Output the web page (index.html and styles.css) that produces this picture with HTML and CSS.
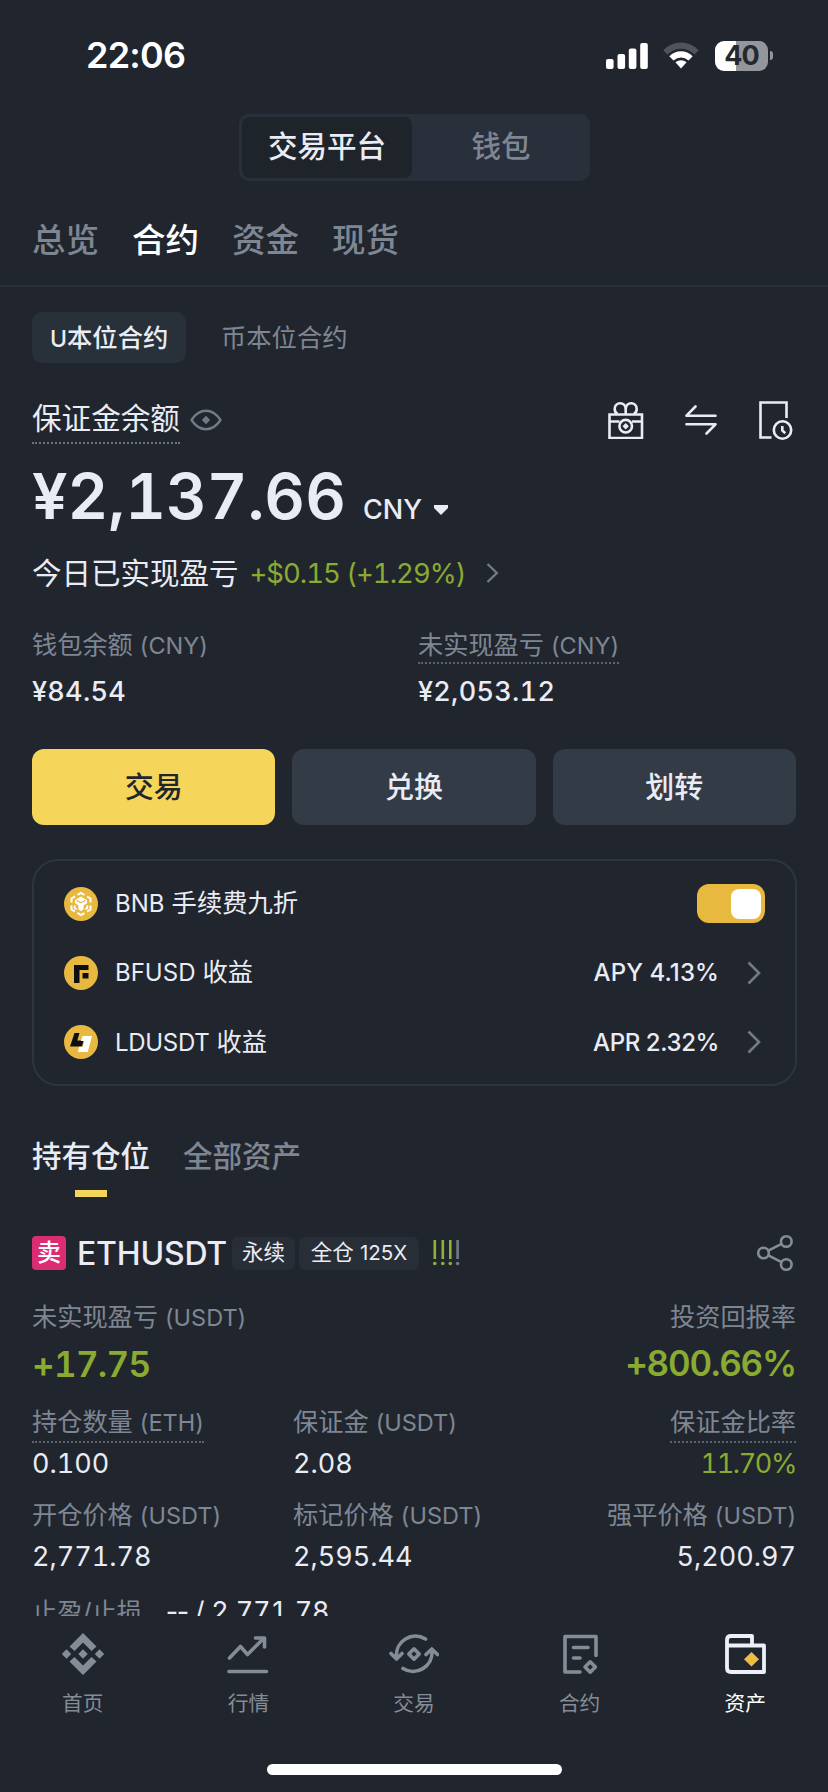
FILE: index.html
```html
<!DOCTYPE html>
<html lang="zh-CN">
<head>
<meta charset="utf-8">
<title>资产</title>
<link rel="stylesheet" href="styles.css">
</head>
<body>
<div class="screen">
  <div class="content">
    <header class="status">
      <span class="time">22:06</span>
      <div class="status-icons">
        <svg width="42" height="26" viewBox="0 0 42 26" fill="#fff"><rect x="0" y="16" width="7.6" height="10" rx="2"/><rect x="11.5" y="11" width="7.6" height="15" rx="2"/><rect x="22.8" y="5.500" width="7.6" height="20.500" rx="2"/><rect x="34.200" y="0" width="7.600" height="26" rx="2"/></svg>
        <svg class="wifi" width="36" height="27" viewBox="0 0 36 27"><path d="M.3 8.200Q8 .5 18 .5T35.700 8.200L31.500 12.500Q25.500 6.800 18 6.800T4.500 12.500Z" fill="#4f545b"/><path d="M6.300 14.200Q11.500 9.300 18 9.300T29.700 14.200L25.500 18.500Q22 15.400 18 15.400T10.500 18.500Z" fill="#fff"/><path d="M12.400 20.300Q15 18.200 18 18.200T23.600 20.300L18 26.600Z" fill="#fff"/></svg>
        <div class="battery"><span>40</span></div>
        <i class="battery-cap"></i>
      </div>
    </header>

    <div class="segment"><span class="on">交易平台</span><span>钱包</span></div>

    <nav class="tabs"><span>总览</span><span class="on">合约</span><span>资金</span><span>现货</span></nav>

    <div class="chips"><span class="chip on"><b class="chip-u">U</b>本位合约</span><span class="chip">币本位合约</span></div>

    <div class="balance-head">
      <span class="balance-label">保证金余额</span>
      <svg width="32" height="22" viewBox="0 0 32 22" fill="none" stroke="#727a86" stroke-width="2.400" stroke-linejoin="round"><path d="M1.500 11Q7.500 1.800 16 1.800T30.500 11Q24.500 20.200 16 20.200T1.500 11Z"/><path d="M16 6.800L20.200 11 16 15.200 11.800 11Z" fill="#727a86" stroke="none"/></svg>
      <div class="tools">
        <svg width="36" height="38" viewBox="0 0 36 38" fill="none" stroke="#eaecf5" stroke-width="2.600"><path d="M1.500 13.500H34V37H1.500ZM1.500 20.500H11.500M24 20.500H34M17.700 13.500V8"/><path d="M17.700 8.200C17.700 0 6.700 .6 6.700 8Q6.700 11.500 9.500 13M17.700 8.200C17.700 0 28.700 .6 28.700 8Q28.700 11.500 25.900 13"/><circle cx="17.700" cy="25.200" r="6.300"/><path d="M17.700 22L20.900 25.200 17.700 28.400 14.500 25.200Z" fill="#eaecf5" stroke="none"/></svg>
        <svg width="32" height="30" viewBox="0 0 32 30" fill="none" stroke="#eaecf5" stroke-width="2.600" stroke-linecap="round" stroke-linejoin="round"><path d="M10.500 1.500L1.500 10.700H30.500M1.500 19.300H30.500L21.500 28.500"/></svg>
        <svg width="35" height="40" viewBox="0 0 35 40" fill="none" stroke="#eaecf5" stroke-width="2.600"><path d="M13.500 37.500H2.500V2.500H28.500V18" /><circle cx="24.500" cy="30" r="8.700"/><path d="M24.300 26V30.500L27.300 33.300"/></svg>
      </div>
    </div>

    <div class="balance"><span class="amount">¥2,137.66</span><span class="currency">CNY</span><svg width="16" height="12" viewBox="0 0 16 12"><path d="M1 1H15V4L8 11 1 4Z" fill="#eaecf5"/></svg></div>

    <div class="today"><span>今日已实现盈亏</span><span class="today-num">+$0.15 (+1.29%)</span><svg width="13" height="20" viewBox="0 0 13 20" fill="none" stroke="#727a86" stroke-width="2.400"><path d="M1.500 1L10.800 10 1.500 19"/></svg></div>

    <div class="stats">
      <div><div class="label">钱包余额 <span class="en">(CNY)</span></div><div class="value med">¥84.54</div></div>
      <div><div class="label dotted">未实现盈亏 <span class="en">(CNY)</span></div><div class="value med">¥2,053.12</div></div>
    </div>

    <div class="actions"><button class="primary">交易</button><button>兑换</button><button>划转</button></div>

    <section class="card">
      <div class="card-row">
        <svg width="34" height="34" viewBox="0 0 34 34"><circle cx="17" cy="17" r="17" fill="#e8b840"/><path d="M17 6L26.500 11.500V22.500L17 28 7.500 22.500V11.500Z" fill="none" stroke="#fff" stroke-width="2" stroke-dasharray="8 3" stroke-dashoffset="4"/><path d="M17 9.500L23 13V16.200L19.600 18.200V22.500L17 24 14.400 22.500V18.200L11 16.200V13Z" fill="#fff"/><path d="M10.700 18.500V21L12.800 22.200M23.300 18.500V21L21.200 22.200" fill="none" stroke="#fff" stroke-width="1.800"/><path d="M12.500 13.200L17 15.700 21.500 13.200" fill="none" stroke="#e8b840" stroke-width="1.200"/></svg>
        <span class="card-name"><span class="en">BNB</span> 手续费九折</span>
        <i class="toggle"></i>
      </div>
      <div class="card-row">
        <svg width="34" height="34" viewBox="0 0 34 34"><circle cx="17" cy="17" r="17" fill="#e8b840"/><path d="M10 9H24.500V14H15.500V27H10ZM18.500 17H24.500V22.500H18.500Z" fill="#0d0f12"/></svg>
        <span class="card-name"><span class="en">BFUSD</span> 收益</span>
        <span class="rate">APY 4.13%</span>
        <svg class="go" width="14" height="24" viewBox="0 0 14 24" fill="none" stroke="#727a86" stroke-width="2.600"><path d="M1.500 1.500L12 12 1.500 22.500"/></svg>
      </div>
      <div class="card-row">
        <svg width="34" height="34" viewBox="0 0 34 34"><circle cx="17" cy="17" r="17" fill="#e8b840"/><path d="M10.500 8H15.500L13.300 15.500H19.500L18 21.500H6Z" fill="#0d0f12"/><path d="M18.500 11H28L23.800 27H13.800L15.200 21.700H18.700L20.200 16H17Z" fill="#fff"/></svg>
        <span class="card-name"><span class="en ld">LDUSDT</span> 收益</span>
        <span class="rate apr">APR 2.32%</span>
        <svg class="go" width="14" height="24" viewBox="0 0 14 24" fill="none" stroke="#727a86" stroke-width="2.600"><path d="M1.500 1.500L12 12 1.500 22.500"/></svg>
      </div>
    </section>

    <nav class="subtabs"><span class="on">持有仓位</span><span>全部资产</span></nav>

    <section class="position">
      <div class="pos-head">
        <span class="side">卖</span><span class="symbol">ETHUSDT</span><span class="tag">永续</span><span class="tag cross">全仓 <span class="lev">125X</span></span>
        <svg class="risk" width="27" height="28" viewBox="0 0 27 28" stroke="#8fb032" stroke-width="2.600" fill="#8fb032"><path d="M1.800 1V20M9.800 1V20M17.300 1V20"/><path d="M24.600 1V20" stroke="#727a86"/><g stroke="none"><circle cx="1.800" cy="24.500" r="1.800"/><circle cx="9.800" cy="24.500" r="1.800"/><circle cx="17.300" cy="24.500" r="1.800"/><circle cx="24.600" cy="24.500" r="1.800" fill="#727a86"/></g></svg>
        <svg class="share" width="38" height="38" viewBox="0 0 38 38" fill="none" stroke="#858c98" stroke-width="2.600"><circle cx="7.500" cy="19" r="5.300"/><circle cx="30.300" cy="7.500" r="5.300"/><circle cx="30.300" cy="30.500" r="5.300"/><path d="M12.300 16.600L25.500 9.900M12.300 21.400L25.500 28.100"/></svg>
      </div>
      <div class="pnl">
        <div><div class="label">未实现盈亏 <span class="en">(USDT)</span></div><div class="pnl-num">+17.75</div></div>
        <div class="right"><div class="label">投资回报率</div><div class="pnl-num roi">+800.66%</div></div>
      </div>
      <div class="metrics first">
        <div><div class="label dotted">持仓数量 <span class="en">(ETH)</span></div><div class="value">0.100</div></div>
        <div><div class="label">保证金 <span class="en">(USDT)</span></div><div class="value">2.08</div></div>
        <div class="right"><div class="label dotted">保证金比率</div><div class="value green">11.70%</div></div>
      </div>
      <div class="metrics second">
        <div><div class="label">开仓价格 <span class="en">(USDT)</span></div><div class="value">2,771.78</div></div>
        <div><div class="label">标记价格 <span class="en">(USDT)</span></div><div class="value">2,595.44</div></div>
        <div class="right"><div class="label">强平价格 <span class="en">(USDT)</span></div><div class="value">5,200.97</div></div>
      </div>
      <div class="tpsl"><span class="label">止盈/止损</span><span class="value"><span class="dashes">--</span> / 2,771.78</span></div>
    </section>
  </div>

  <footer class="dock">
    <nav class="dock-items">
      <div class="dock-item"><svg width="44" height="44" viewBox="0 0 44 44" fill="#858c98"><path d="M22 1L35.500 14.500 30.500 19 22 10.500 13.500 19 8.500 14.500ZM22 43L35.500 29.500 30.500 25 22 33.500 13.500 25 8.500 29.500ZM22 17.300L26.700 22 22 26.700 17.300 22ZM5.500 17.300L10.200 22 5.500 26.700 .8 22ZM38.500 17.300L43.200 22 38.500 26.700 33.800 22Z"/></svg><span>首页</span></div>
      <div class="dock-item"><svg width="44" height="44" viewBox="0 0 44 44" fill="none" stroke="#858c98" stroke-width="3.600" stroke-linejoin="round" stroke-linecap="round"><path d="M3.500 26L14.500 14.500 21.500 22.500 37.500 6.500M29.500 6H38.500V15M3 39.500H40.500"/></svg><span>行情</span></div>
      <div class="dock-item"><svg width="50" height="44" viewBox="0 0 50 44" fill="none" stroke="#858c98" stroke-width="3.600" stroke-linejoin="round" stroke-linecap="round"><path d="M36.500 7A19 19 0 0 0 7.500 25M2 21.500L7.500 27 13 21.500M14 36.500A19 19 0 0 0 43 19M37 22.500L42.800 17 48.500 22.500"/><path d="M25 16.800L30.200 22 25 27.200 19.800 22Z"/></svg><span>交易</span></div>
      <div class="dock-item"><svg width="44" height="44" viewBox="0 0 44 44" fill="none" stroke="#858c98" stroke-width="3.600" stroke-linejoin="round" stroke-linecap="round"><path d="M22 40H7V4.500H38V23.500M15.500 15.500H30M15.500 26H22"/><path d="M32.200 29.800L37.400 35 32.200 40.200 27 35Z"/></svg><span>合约</span></div>
      <div class="dock-item on"><svg width="44" height="44" viewBox="0 0 44 44" fill="none" stroke="#eef0f8" stroke-width="3.800" stroke-linejoin="round"><path d="M29 13V4H8Q4 4 4 8V36Q4 40 8 40H41V13.500H4"/><path d="M28.500 20L36 27.200 28.500 34.500 21 27.200Z" fill="#ecbd42" stroke="none"/></svg><span>资产</span></div>
    </nav>
    <i class="home-bar"></i>
  </footer>
</div>
</body>
</html>
```

FILE: styles.css
```css
* { box-sizing: border-box; }

body {
  margin: 0;
  background: #21262e;
  color: #eaecf5;
  font-family: Inter, "Noto Sans CJK SC", sans-serif;
}

svg { display: block; flex: none; }

.screen {
  width: 828px;
  height: 1792px;
  display: flex;
  flex-direction: column;
  overflow: hidden;
}

.content { height: 1616px; flex: none; overflow: hidden; }

/* Status bar */
.status {
  height: 111px;
  padding: 0 55px 0 86px;
  display: flex;
  align-items: center;
  justify-content: space-between;
  color: #fff;
}
.time { font-size: 36px; font-weight: 600; line-height: 40px; letter-spacing: -0.8px; transform: translateY(-1px); }
.status-icons { display: flex; align-items: center; }
.wifi { margin: 0 16px 0 15px; }
.battery {
  width: 53px;
  height: 30px;
  border-radius: 9px;
  background: linear-gradient(90deg, #fff 21.5px, #94969b 21.5px);
  color: #24292f;
  font-size: 27px;
  font-weight: 700;
  line-height: 30px;
  text-align: center;
  letter-spacing: -1px;
}
.battery-cap { width: 3px; height: 9px; margin-left: 2px; border-radius: 0 4px 4px 0; background: #94969b; }

/* Platform switch */
.segment {
  display: flex;
  width: 351px;
  height: 67px;
  margin: 3px auto 0 239px;
  padding: 3px;
  border-radius: 10px;
  background: #292f3b;
  font-size: 29.500px;
  line-height: 59px;
  text-align: center;
  color: #7f8693;
}
.segment span { flex: 1; padding-left: 3px; font-weight: 500; }
.segment .on { flex: none; width: 170px; padding-left: 0; border-radius: 8px; background: #1f242b; color: #eaecf5; }

.tabs {
  display: flex;
  gap: 33px;
  height: 106px;
  padding: 13px 32px 0;
  border-bottom: 2px solid #2b3139;
  font-size: 33.500px;
  font-weight: 500;
  line-height: 92px;
  color: #7f8693;
}
.tabs .on { color: #fff; }

.chips { display: flex; gap: 17px; margin: 25px 32px 0; }
.chip { height: 51px; padding: 0 18px; border-radius: 10px; font-size: 25.300px; line-height: 51px; color: #7f8693; }
.chip.on { width: 154px; background: #28303a; color: #eaecf5; font-weight: 500; white-space: nowrap; }
.chip-u { font-size: 23px; font-weight: 500; }

/* Margin balance */
.balance-head { display: flex; align-items: center; height: 49px; margin: 32px 35px 0 32px; }
.balance-label {
  height: 49px;
  margin-right: 10px;
  border-bottom: 2px dotted #6c737e;
  font-size: 29.600px;
  line-height: 47px;
}
.tools { display: flex; align-items: center; gap: 41px; margin-left: auto; }

.balance { display: flex; align-items: baseline; height: 60px; margin: 22px 32px 0; line-height: 60px; }
.amount { width: 331px; font-size: 63px; font-weight: 600; font-variant-numeric: tabular-nums; }
.currency { width: 70px; font-size: 27px; font-weight: 500; }
.balance svg { transform: translateY(-3px); }

.today { display: flex; align-items: center; height: 40px; margin: 27px 32px 0; font-size: 29.500px; line-height: 38px; }
.today-num { width: 236px; margin-left: 11px; font-size: 27.500px; font-variant-numeric: tabular-nums; letter-spacing: -1px; color: #8aab32; white-space: nowrap; }

.label { width: max-content; font-size: 25.200px; line-height: 32px; color: #7f8693; white-space: nowrap; }
.label .en { font-size: 23.500px; }
.dotted { border-bottom: 2px dotted #5d646f; }
.value { font-size: 27px; line-height: 32px; font-variant-numeric: tabular-nums; white-space: nowrap; }
.med { font-weight: 500; letter-spacing: 0.3px; }
.green { letter-spacing: -1.4px; color: #8aab32; }

.stats { display: grid; grid-template-columns: 386px 1fr; margin: 36px 32px 0; }
.stats .label { height: 35px; }
.stats .value { margin-top: 12px; }

.actions { display: grid; grid-template-columns: repeat(3, 1fr); gap: 17px; margin: 41px 32px 0; }
.actions button {
  height: 76px;
  padding: 0 0 5px;
  border: 0;
  border-radius: 12px;
  background: #333b46;
  color: #eaecf5;
  font-family: inherit;
  font-size: 29px;
  font-weight: 500;
}
.actions .primary { background: #f6d65a; color: #22262c; }

/* Fee and yield card */
.card { height: 227px; margin: 34px 31px 0 32px; padding: 8px 30px 0 30px; border: 2px solid #2e353e; border-radius: 26px; }
.card-row { display: flex; align-items: center; height: 69.300px; }
.card-name { margin: 0 auto 0 17px; font-size: 25.300px; line-height: 32px; }
.card-name .en { font-size: 24px; }
.card-name .ld { letter-spacing: -0.3px; }
.toggle { width: 68px; height: 39px; padding: 5px 4px 4px 34px; border-radius: 12px; background: #e8b93f; }
.toggle::after { content: ""; display: block; width: 30px; height: 30px; border-radius: 8px; background: #fff; }
.rate { font-size: 24px; font-weight: 500; letter-spacing: 0.1px; }
.apr { letter-spacing: -0.4px; }
.go { margin: 0 4px 0 28px; }

.subtabs { display: flex; gap: 33px; height: 61px; margin: 50px 32px 0; font-size: 29.500px; line-height: 40px; color: #7f8693; }
.subtabs span { font-weight: 500; }
.subtabs .on { display: flex; flex-direction: column; align-items: center; justify-content: space-between; color: #eaecf5; }
.subtabs .on::after { content: ""; width: 32px; height: 7px; background: #f6d65a; }

/* Open position */
.position { margin: 39px 32px 0; }
.pos-head { display: flex; align-items: center; height: 34px; }
.side { width: 34px; height: 34px; border-radius: 4px; background: #dc2d73; font-size: 24px; font-weight: 500; line-height: 33px; text-align: center; color: #fff; }
.symbol { width: 155px; margin-left: 11px; font-size: 32px; font-weight: 500; letter-spacing: -0.2px; }
.tag { width: 63px; height: 33px; border-radius: 6px; background: #272e37; font-size: 21.500px; line-height: 31px; text-align: center; white-space: nowrap; }
.cross { width: 120px; margin-left: 4px; }
.lev { font-size: 20.500px; }
.risk { margin-left: 14px; }
.share { margin: 0 2px 0 auto; }

.right { justify-self: end; text-align: right; }
.right .label { margin-left: auto; }
.pnl { display: grid; grid-template-columns: 1fr 1fr; margin-top: 31px; }
.pnl-num { height: 40px; margin-top: 10px; font-size: 35px; font-weight: 600; line-height: 40px; letter-spacing: -0.7px; font-variant-numeric: tabular-nums; color: #8aab32; }
.roi { letter-spacing: -1.2px; }
.metrics { display: grid; grid-template-columns: 261px 261px 1fr; }
.first { margin-top: 22px; }
.first .label { height: 37px; }
.first .value { margin-top: 5px; }
.second { margin-top: 19px; }
.second .value { margin-top: 9px; }
.tpsl { display: flex; gap: 24px; margin-top: 23px; }
.tpsl .value { letter-spacing: -0.2px; }
.dashes { font-variant-numeric: normal; letter-spacing: -1.5px; }

/* Bottom navigation */
.dock { height: 176px; flex: none; }
.dock-items { display: grid; grid-template-columns: repeat(5, 1fr); height: 148px; padding-top: 16px; }
.dock-item { display: flex; flex-direction: column; align-items: center; font-size: 20.700px; line-height: 30px; color: #858c98; }
.dock-item span { margin-top: 13px; }
.dock-item.on { color: #fff; }
.home-bar { display: block; width: 295px; height: 11px; margin: 0 auto; border-radius: 6px; background: #fff; }
```
